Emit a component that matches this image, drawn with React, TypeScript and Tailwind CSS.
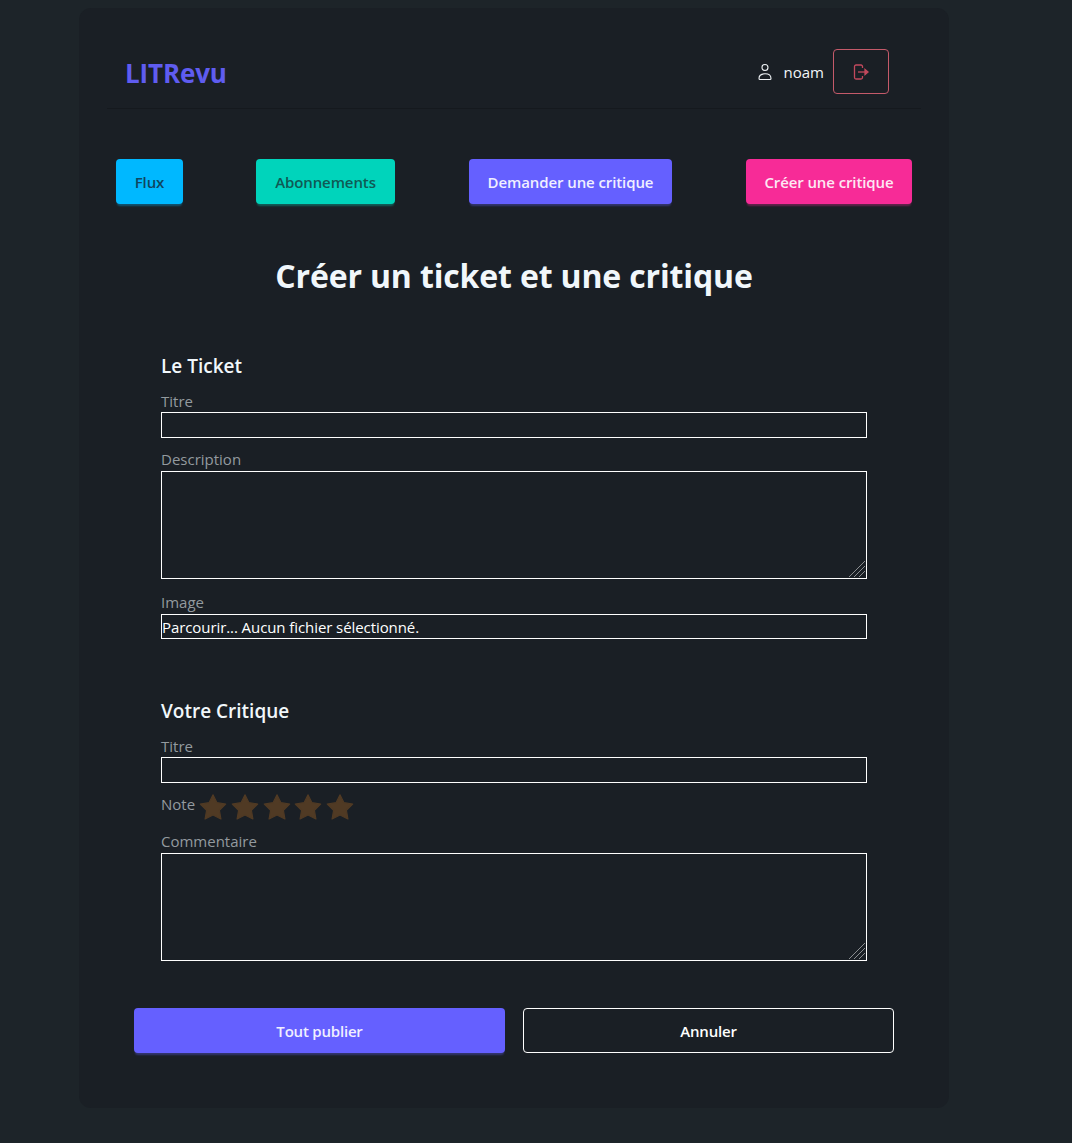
import React from "react";

const font = { fontFamily: '"Open Sans", "Noto Sans", sans-serif' };

const Handle = () => (
  <svg className="absolute right-[1px] bottom-[1px]" width="18" height="18" viewBox="0 0 18 18">
    <path d="M1 17 L17 1 M6 17 L17 6 M11 17 L17 11" stroke="#8a8d90" strokeWidth="1" fill="none" />
  </svg>
);

const Field = ({ label }: { label: string }) => (
  <div className="flex flex-col">
    <label className="text-[15px] leading-[21px] text-[#939a9f]">{label}</label>
    <input type="text" className="h-[26px] w-[706px] border border-white bg-transparent" />
  </div>
);

const Area = ({ label }: { label: string }) => (
  <div className="flex flex-col">
    <label className="mb-[1px] text-[15px] leading-[21px] text-[#939a9f]">{label}</label>
    <div className="relative h-[108px] w-[706px]">
      <textarea className="block h-full w-full resize-none border border-white bg-transparent" />
      <Handle />
    </div>
  </div>
);

const Star = () => (
  <svg width="28" height="28" viewBox="0 0 24 24" fill="#503a24" stroke="#503a24" strokeWidth="1" strokeLinejoin="round">
    <path d="M12 1.500 15.400 8.300 22.900 9.400 17.500 14.800 18.800 22.300 12 18.800 5.200 22.300 6.500 14.800 1.100 9.400 8.600 8.300z" />
  </svg>
);

export default function App() {
  return (
    <div className="min-h-[1143px] bg-[#1d2429] pt-2" style={font}>
      <div className="ml-[79px] h-[1100px] w-[870px] rounded-xl bg-[#1a1f25] px-7">
        <header className="flex h-[101px] items-center justify-between border-b border-[#15191e] pr-[32px] pb-[1px] pl-[18px] pt-[28px]">
          <div className="mt-[4px] text-[26px] font-bold tracking-[-0.15px] text-[#5f5cf0]">LITRevu</div>
          <div className="flex items-center">
            <svg width="16" height="18" viewBox="0 0 16 18" fill="none" stroke="#eef2f5" strokeWidth="1.1">
              <circle cx="8" cy="4.500" r="3" />
              <path d="M2 15.500c0-3.200 2.500-4.700 6-4.700s6 1.500 6 4.700c0 .6-.5 1-1 1H3c-.5 0-1-.4-1-1z" />
            </svg>
            <span className="mt-[1px] ml-[11px] text-[15px] text-[#f3f6f8]">noam</span>
            <button className="ml-[9px] flex h-[45px] w-[56px] items-center justify-center rounded border border-[#c45a6a]">
              <svg width="16" height="16" viewBox="0 0 16 16" fill="none" stroke="#c2495d" strokeWidth="1.300">
                <path d="M9.500 4V2.500a1.500 1.500 0 0 0-1.500-1.500H3a1.500 1.500 0 0 0-1.500 1.500v11A1.500 1.500 0 0 0 3 15h5a1.500 1.500 0 0 0 1.500-1.500V12" />
                <path d="M5 8h9" />
                <path d="M12 5.500 15 8l-3 2.500z" fill="#c2495d" />
              </svg>
            </button>
          </div>
        </header>

        <nav className="mt-[50px] flex justify-between px-[9px] text-[15px] font-semibold tracking-[-0.1px]">
          <a className="-mr-[1px] flex h-[45px] w-[67px] items-center justify-center rounded bg-[#00b8ff] pt-[1px] text-[#0f4660] shadow-[0_3px_2px_-1px_rgba(0,184,255,0.35)]">Flux</a>
          <a className="flex h-[45px] w-[139px] items-center justify-center rounded bg-[#00d4bb] pt-[1px] text-[#0f5a55] shadow-[0_3px_2px_-1px_rgba(0,212,187,0.35)]">Abonnements</a>
          <a className="flex h-[45px] w-[203px] items-center justify-center rounded bg-[#6560ff] pt-[1px] text-[#f0efff] shadow-[0_3px_2px_-1px_rgba(101,96,255,0.35)]">Demander une critique</a>
          <a className="flex h-[45px] w-[166px] items-center justify-center rounded bg-[#f72b97] pt-[1px] text-[#fde8f3] shadow-[0_3px_2px_-1px_rgba(247,43,151,0.35)]">Créer une critique</a>
        </nav>

        <h1 className="mt-[48px] text-center text-[32px] leading-[48px] font-bold tracking-[-0.15px] text-[#f1f7fb]">Créer un ticket et une critique</h1>

        <form className="mt-[52px] flex flex-col pl-[54px]">
          <h2 className="text-[19px] leading-[28px] font-semibold text-[#f1f7fb]">Le Ticket</h2>
          <div className="mt-[11px] flex flex-col">
            <Field label="Titre" />
            <div className="mt-[11px]"><Area label="Description" /></div>
            <div className="mt-[13px] flex flex-col">
              <label className="mb-[1px] text-[15px] leading-[21px] text-[#939a9f]">Image</label>
              <div className="h-[25px] w-[706px] border border-white text-[15px] leading-[24px] tracking-[-0.08px] text-white">Parcourir... Aucun fichier sélectionné.</div>
            </div>
          </div>

          <h2 className="mt-[58px] text-[19px] leading-[28px] font-semibold text-[#f1f7fb]">Votre Critique</h2>
          <div className="mt-[11px] flex flex-col">
            <Field label="Titre" />
            <div className="mt-[9px] flex h-[30px] items-center">
              <label className="mb-[5px] text-[15px] text-[#939a9f]">Note</label>
              <div className="ml-[4px] flex gap-[3.75px]"><Star /><Star /><Star /><Star /><Star /></div>
            </div>
            <div className="mt-[9px]"><Area label="Commentaire" /></div>
          </div>
        </form>

        <div className="mt-[47px] flex gap-[18px] pl-[27px] text-[15px] font-semibold tracking-[-0.2px]">
          <button className="h-[45px] w-[371px] rounded bg-[#6560ff] pt-[1px] text-[#f0efff] shadow-[0_3px_2px_-1px_rgba(101,96,255,0.35)]">Tout publier</button>
          <button className="h-[45px] w-[371px] rounded border border-white pt-[1px] text-white">Annuler</button>
        </div>
      </div>
    </div>
  );
}
